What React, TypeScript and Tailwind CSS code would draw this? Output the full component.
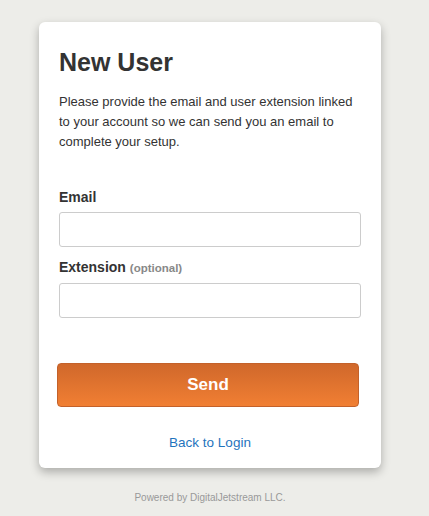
export default function App() {
  return (
    <div className="min-h-[516px] w-full bg-[#ededE9] pt-[22px] font-['Liberation_Sans',Arial,sans-serif]">
      <div className="ml-[39px] w-[342px] rounded-[6px] bg-white px-[20px] pb-[15px] pt-[25px] shadow-[0_4px_10px_rgba(0,0,0,0.28)]">
        <h1 className="text-[25px] font-bold leading-[30px] text-[#333333]">New User</h1>
        <p className="mt-[15px] text-[13px] leading-[20px] text-[#333333]">
          Please provide the email and user extension linked to your account so we can send you an email to complete your setup.
        </p>
        <label className="mt-[35px] block text-[14px] font-bold leading-[20px] text-[#333333]">Email</label>
        <input className="mt-[5px] block h-[35px] w-[302px] rounded-[3px] border border-[#cccccc] bg-white" />
        <label className="mt-[10px] block text-[14px] font-bold leading-[20px] text-[#333333]">
          Extension <span className="text-[11.5px] text-[#888888]">(optional)</span>
        </label>
        <input className="mt-[5px] block h-[35px] w-[302px] rounded-[3px] border border-[#cccccc] bg-white" />
        <button className="-ml-[2px] mt-[45px] flex h-[44px] w-[302px] items-center justify-center rounded-[4px] border border-[#c3612a] bg-gradient-to-b from-[#d0682b] to-[#f17f33] text-[17px] font-bold text-white">
          Send
        </button>
        <div className="mt-[26px] text-center text-[13.5px] leading-[20px] text-[#1f74bd]">Back to Login</div>
      </div>
      <div className="ml-[39px] mt-[23px] w-[342px] text-center text-[10px] leading-[14px] text-[#999999]">Powered by DigitalJetstream LLC.</div>
    </div>
  );
}
